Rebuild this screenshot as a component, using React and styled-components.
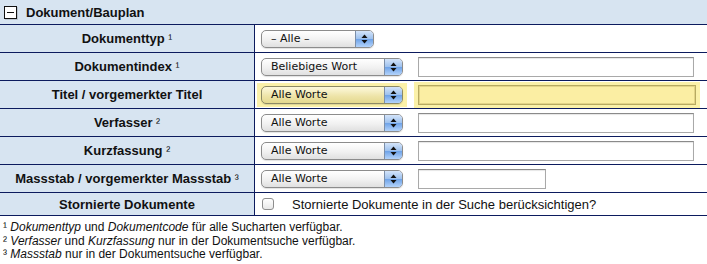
import styled, { createGlobalStyle } from "styled-components";

const Global = createGlobalStyle`
  body {
    margin: 0;
    background: #fff;
    font-family: "Liberation Sans", Arial, sans-serif;
    color: #111;
  }
`;

export default function App() {
  return (
    <Page>
      <Global />
      <Header>
        <Toggle />
        <span>Dokument/Bauplan</span>
      </Header>
      <Table>
        <Row>
          <Label>Dokumenttyp <Sup>¹</Sup></Label>
          <Cell>
            <Select width={113} text="– Alle –" />
          </Cell>
        </Row>
        <Row>
          <Label>Dokumentindex <Sup>¹</Sup></Label>
          <Cell>
            <Select width={142} text="Beliebiges Wort" />
            <TextInput width={276} />
          </Cell>
        </Row>
        <Row>
          <Label>Titel / vorgemerkter Titel</Label>
          <Cell>
            <Glow>
              <Select width={142} text="Alle Worte" focused />
            </Glow>
            <Glow>
              <TextInput width={278} focused />
            </Glow>
          </Cell>
        </Row>
        <Row>
          <Label>Verfasser <Sup>²</Sup></Label>
          <Cell>
            <Select width={142} text="Alle Worte" />
            <TextInput width={276} />
          </Cell>
        </Row>
        <Row>
          <Label>Kurzfassung <Sup>²</Sup></Label>
          <Cell>
            <Select width={142} text="Alle Worte" />
            <TextInput width={276} />
          </Cell>
        </Row>
        <Row>
          <Label>Massstab / vorgemerkter Massstab <Sup>³</Sup></Label>
          <Cell>
            <Select width={142} text="Alle Worte" />
            <TextInput width={128} />
          </Cell>
        </Row>
        <Row last>
          <Label>Stornierte Dokumente</Label>
          <Cell>
            <Check />
            <CheckText>Stornierte Dokumente in der Suche berücksichtigen?</CheckText>
          </Cell>
        </Row>
      </Table>
      <Notes>
        <li>¹ <i>Dokumenttyp</i> und <i>Dokumentcode</i> für alle Sucharten verfügbar.</li>
        <li>² <i>Verfasser</i> und <i>Kurzfassung</i> nur in der Dokumentsuche verfügbar.</li>
        <li>³ <i>Massstab</i> nur in der Dokumentsuche verfügbar.</li>
      </Notes>
    </Page>
  );
}

function Select({ width, text, focused }) {
  return (
    <SelectBox style={{ width }} focused={focused}>
      <SelectText>{text}</SelectText>
      <Arrows>
        <svg width="7" height="10" viewBox="0 0 7 10">
          <path d="M3.5 0.5 L6.5 4 L0.5 4 Z" fill="#111" />
          <path d="M3.5 9.5 L6.5 6 L0.5 6 Z" fill="#111" />
        </svg>
      </Arrows>
    </SelectBox>
  );
}

function TextInput({ width, focused }) {
  return <InputBox style={{ width }} focused={focused} />;
}

const Page = styled.div`
  width: 707px;
`;

const Header = styled.div`
  display: flex;
  align-items: center;
  gap: 9px;
  height: 24px;
  padding-left: 4px;
  background: #d7e4f1;
  font-size: 13px;
  font-weight: bold;
  box-sizing: border-box;
`;

const Toggle = styled.div`
  position: relative;
  width: 11px;
  height: 11px;
  border: 1px solid #111;
  background: #fff;
  box-shadow: 1px 1px 0 #b9c4d0;
  &::after {
    content: "";
    position: absolute;
    left: 2px;
    right: 2px;
    top: 5px;
    height: 1px;
    background: #111;
  }
`;

const Table = styled.div`
  display: flex;
  flex-direction: column;
`;

const Row = styled.div`
  display: grid;
  grid-template-columns: 255px 1fr;
  height: ${(p) => (p.last ? 24 : 28)}px;
  border-top: 1px solid #0c1b5e;
  border-bottom: ${(p) => (p.last ? "1px solid #0c1b5e" : "none")};
  box-sizing: border-box;
`;

const Label = styled.div`
  display: flex;
  align-items: center;
  justify-content: center;
  background: #d7e4f1;
  border-right: 1px solid #0c1b5e;
  font-size: 13px;
  font-weight: bold;
  color: #111;
  white-space: pre;
`;

const Sup = styled.span`
  font-size: 12px;
  font-weight: normal;
`;

const Cell = styled.div`
  display: flex;
  align-items: center;
  gap: 15px;
  padding-left: 6px;
`;

const Glow = styled.div`
  display: flex;
  align-items: center;
  margin: 0 -4px;
  padding: 3px 4px;
  background: #fbf1a9;
`;

const SelectBox = styled.div`
  display: flex;
  align-items: stretch;
  height: 18px;
  box-sizing: border-box;
  border: 1px solid ${(p) => (p.focused ? "#8d8a66" : "#8c8c8c")};
  border-radius: 5px;
  background: ${(p) =>
    p.focused
      ? "linear-gradient(#fdf9dc, #ede3a6 60%, #e4d98f)"
      : "linear-gradient(#ffffff, #f1f1f1 55%, #e0e0e0)"};
  box-shadow: 0 1px 1px rgba(0, 0, 0, 0.12);
  overflow: hidden;
`;

const SelectText = styled.div`
  flex: 1;
  padding-left: 9px;
  font-size: 11px;
  line-height: 16px;
  color: #111;
  font-family: "DejaVu Sans", Verdana, sans-serif;
  white-space: nowrap;
`;

const Arrows = styled.div`
  display: flex;
  align-items: center;
  justify-content: center;
  width: 17px;
  border-left: 1px solid #7b8ea8;
  background: linear-gradient(#d4e4fa, #9cc0ee 50%, #6fa3e8 52%, #b3d3fb);
`;

const InputBox = styled.div`
  height: 20px;
  box-sizing: border-box;
  border: 1px solid #a9a9a9;
  border-top-color: #8a8a8a;
  background: ${(p) => (p.focused ? "#fbeea3" : "#fff")};
  box-shadow: ${(p) => (p.focused ? "inset 0 0 0 1px #e3d488" : "inset 0 1px 1px #e6e6e6")};
  ${(p) => p.focused && "border-color: #b7aa62;"}
`;

const Check = styled.div`
  width: 12px;
  height: 12px;
  margin-left: 1px;
  box-sizing: border-box;
  border: 1px solid #8d8d8d;
  border-radius: 3px;
  background: linear-gradient(#ffffff, #e8e8e8);
`;

const CheckText = styled.span`
  margin-left: 3px;
  font-size: 13px;
  color: #111;
`;

const Notes = styled.ul`
  list-style: none;
  margin: 0;
  padding: 5px 0 0 3px;
  font-size: 12px;
  line-height: 13.5px;
  color: #111;
`;
